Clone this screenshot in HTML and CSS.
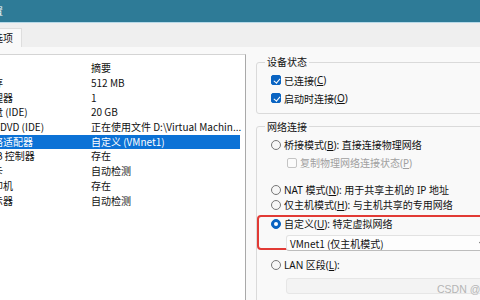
FILE: index.html
```html
<!DOCTYPE html>
<html lang="zh-CN">
<head>
  <meta charset="UTF-8">
  <title>虚拟机设置</title>
  <link rel="stylesheet" href="styles.css">
</head>
<body>
  <div class="titlebar"><span class="title">虚拟机设置</span></div>

  <div class="tabs">
    <div class="tab">选项</div>
  </div>

  <div class="content">
    <!-- device list, cropped on the left like the original shot -->
    <div class="devices">
      <div class="row head"><span class="name">设备</span><span class="sum">摘要</span></div>
      <div class="row"><span class="name">内存</span><span class="sum">512 MB</span></div>
      <div class="row"><span class="name">处理器</span><span class="sum">1</span></div>
      <div class="row"><span class="name">硬盘 (IDE)</span><span class="sum">20 GB</span></div>
      <div class="row"><span class="name">CD/DVD (IDE)</span><span class="sum">正在使用文件 D:\Virtual Machin...</span></div>
      <div class="row selected"><span class="name">网络适配器</span><span class="sum">自定义 (VMnet1)</span></div>
      <div class="row"><span class="name">USB 控制器</span><span class="sum">存在</span></div>
      <div class="row"><span class="name">声卡</span><span class="sum">自动检测</span></div>
      <div class="row"><span class="name">打印机</span><span class="sum">存在</span></div>
      <div class="row"><span class="name">显示器</span><span class="sum">自动检测</span></div>
    </div>

    <div class="panel">
      <fieldset class="group status">
        <legend>设备状态</legend>
        <div class="opt first"><span class="check on"></span>已连接(<u>C</u>)</div>
        <div class="opt"><span class="check on"></span>启动时连接(<u>O</u>)</div>
      </fieldset>

      <fieldset class="group network">
        <legend>网络连接</legend>
        <div class="opt bridged"><span class="radio"></span>桥接模式(<u>B</u>): 直接连接物理网络</div>
        <div class="opt sub disabled"><span class="check"></span>复制物理网络连接状态(<u>P</u>)</div>
        <div class="opt nat"><span class="radio"></span>NAT 模式(<u>N</u>): 用于共享主机的 IP 地址</div>
        <div class="opt"><span class="radio"></span>仅主机模式(<u>H</u>): 与主机共享的专用网络</div>
        <div class="highlight">
          <div class="opt custom"><span class="radio on"></span>自定义(<u>U</u>): 特定虚拟网络</div>
          <div class="select">VMnet1 (仅主机模式)<span class="chev"></span></div>
        </div>
        <div class="opt lan"><span class="radio"></span>LAN 区段(<u>L</u>):</div>
        <div class="select off"></div>
      </fieldset>
    </div>
  </div>

  <div class="watermark">CSDN @虚拟机</div>
</body>
</html>
```

FILE: styles.css
```css
body {
  margin: 0;
  width: 480px;
  height: 300px;
  overflow: hidden;
  position: relative;
  background: #f9f9f9;
  font-family: "Noto Sans", "Noto Sans CJK SC", sans-serif;
  font-size: 10px;
  color: #111;
}

.titlebar {
  height: 22px;
  background: #2e7b97;
  border-bottom: 1px solid #b7d9e8;
  color: #fff;
  white-space: nowrap;
  overflow: hidden;
}

.title {
  display: block;
  margin-left: -47px;
  line-height: 22px;
}

.tabs {
  height: 24px;
  background: #efefef;
  box-sizing: border-box;
  padding-top: 5px;
}

.tab {
  display: inline-block;
  height: 19px;
  line-height: 18px;
  margin-left: -14px;
  padding: 0 8px 0 6px;
  background: #f9f9f9;
  border: 1px solid #dedede;
  border-bottom: none;
  box-sizing: border-box;
}

.content {
  display: flex;
  padding-top: 7px;
}

.devices {
  flex: none;
  width: 246px;
  height: 260px;
  box-sizing: border-box;
  padding-right: 5px;
  background: #fff;
  border-top: 1px solid #d4d4d4;
  border-right: 1px solid #a9a9a9;
  overflow: hidden;
  font-family: "Noto Sans CJK SC", sans-serif;
}

.row {
  display: flex;
  height: 14.7px;
  line-height: 14.7px;
  white-space: nowrap;
}

.row.head {
  height: 21px;
  box-sizing: border-box;
  padding-top: 5px;
  line-height: 15px;
}

.name {
  flex: none;
  width: 108px;
  margin-left: -17px;
  overflow: hidden;
}

.head .name {
  text-indent: -20px;
}

.sum {
  flex: none;
}

.row.selected {
  background: #0c72d6;
  color: #fff;
}

.panel {
  flex: none;
  width: 250px;
  margin-left: 10px;
}

.group {
  margin: 0;
  padding: 0 0 0 14px;
  border: 1px solid #dadada;
  border-radius: 3px;
}

.group legend {
  margin-left: -6px;
  padding: 0 2px;
  height: 16px;
  line-height: 16px;
}

.status {
  padding-bottom: 7px;
}

.network {
  margin-top: 5px;
  height: 200px;
}

.opt {
  display: flex;
  align-items: center;
  height: 15px;
  white-space: nowrap;
}

.status .first { margin-top: 2.5px; }
.status .opt + .opt { margin-top: 3px; }

.network .bridged { margin-top: 2.5px; }
.network .sub { margin-top: 3px; padding-left: 16px; }
.network .nat { margin-top: 12px; }
.network .custom { margin-top: 4px; }
.network .lan { margin-top: 6.5px; }

.opt.disabled {
  color: #a0a0a0;
}

u {
  text-underline-offset: 1px;
}

.check,
.radio {
  flex: none;
  width: 10px;
  height: 10px;
  margin-right: 3px;
  box-sizing: border-box;
  position: relative;
}

.check {
  border: 1px solid #c4c4c4;
  border-radius: 2px;
  background: #fbfbfb;
}

.check.on {
  background: #0a64c2;
  border-color: #0a64c2;
}

.check.on::after {
  content: "";
  position: absolute;
  left: 2.5px;
  top: 0.5px;
  width: 2.5px;
  height: 5px;
  border: solid #fff;
  border-width: 0 1.3px 1.3px 0;
  transform: rotate(40deg);
}

.radio {
  border: 1px solid #767676;
  border-radius: 50%;
  background: #f6f6f6;
}

.radio.on {
  background: #0a64c2;
  border-color: #0a64c2;
}

.radio.on::after {
  content: "";
  position: absolute;
  left: 2px;
  top: 2px;
  width: 4px;
  height: 4px;
  border-radius: 50%;
  background: #fff;
}

.highlight {
  position: relative;
}

.highlight::before {
  content: "";
  position: absolute;
  left: -14px;
  top: -1px;
  right: -40px;
  bottom: 1px;
  border: 2px solid #e23a35;
  border-radius: 4px;
}

.select {
  position: relative;
  margin: 3.5px 0 0 15px;
  width: 210px;
  height: 16px;
  line-height: 15px;
  padding-left: 3px;
  box-sizing: border-box;
  background: #fdfdfd;
  border: 1px solid #e2e2e2;
  border-bottom-color: #bdbdbd;
  border-radius: 3px;
  font-family: "Noto Sans CJK SC", sans-serif;
}

.chev {
  position: absolute;
  right: 10px;
  top: 4px;
  width: 4px;
  height: 4px;
  border: solid #6a6a6a;
  border-width: 0 1px 1px 0;
  transform: rotate(45deg);
}

.select.off {
  margin-top: 5.5px;
  background: #f3f3f3;
  border-color: #e6e6e6;
}

.watermark {
  position: absolute;
  left: 437px;
  top: 281px;
  font-family: "Liberation Sans", "Noto Sans CJK SC", sans-serif;
  font-size: 10.5px;
  color: #b5b5b5;
  white-space: nowrap;
}
```
